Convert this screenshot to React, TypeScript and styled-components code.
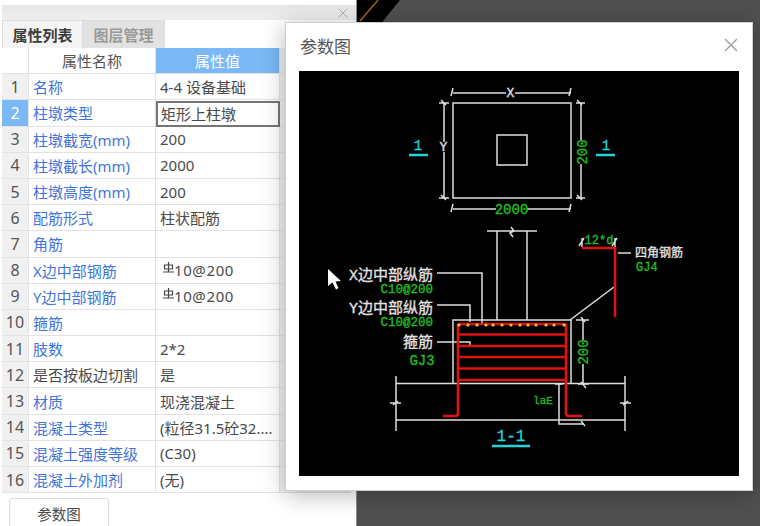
import React from 'react';
import styled, { createGlobalStyle } from 'styled-components';

const Global = createGlobalStyle`
  html, body { margin: 0; padding: 0; background: #fff; overflow: hidden; }
  * { box-sizing: border-box; }
`;

const FONT = `"Noto Sans", "Noto Sans CJK SC", sans-serif`;
const CAD = `"Liberation Mono", "Noto Sans CJK SC", monospace`;

const Screen = styled.div`
  position: relative;
  width: 760px;
  height: 526px;
  display: flex;
  overflow: hidden;
  background: #fff;
  font-family: ${FONT};
`;

const Panel = styled.div`
  width: 356px;
  height: 526px;
  padding: 5px 0 0 2px;
  display: flex;
  flex-direction: column;
  background: #fff;
  flex: none;
`;

const TitleBar = styled.div`
  height: 15px;
  flex: none;
  display: flex;
  align-items: center;
  justify-content: flex-end;
  padding-right: 8px;
  background: linear-gradient(#e7e7e7, #eeeeee);
  color: #aaa;
`;

const Tabs = styled.div`
  height: 28px;
  flex: none;
  display: flex;
  align-items: stretch;
`;

const Tab = styled.div<{ $active?: boolean }>`
  width: ${p => (p.$active ? 81 : 82)}px;
  display: flex;
  align-items: center;
  justify-content: center;
  font-size: 15px;
  font-weight: 700;
  background: ${p => (p.$active ? '#f4f4f4' : '#e2e2e2')};
  color: ${p => (p.$active ? '#3c3c3c' : '#9a9a9a')};
  border: 1px solid #dcdcdc;
  border-left-width: ${p => (p.$active ? 1 : 0)}px;
  border-bottom: none;
`;

const Grid = styled.div`
  width: 349px;
  flex: none;
  display: flex;
  flex-direction: column;
`;

const Row = styled.div`
  height: 26.2px;
  flex: none;
  display: grid;
  grid-template-columns: 27px 127px 124px 71px;
`;

const Cell = styled.div`
  display: flex;
  align-items: center;
  font-size: 15px;
  white-space: nowrap;
  overflow: hidden;
  border-right: 1.5px solid #e2e2e2;
  border-bottom: 1.5px solid #e2e2e2;
`;

const HeadCell = styled(Cell)<{ $on?: boolean }>`
  justify-content: center;
  background: ${p => (p.$on ? '#7ab9f6' : '#fff')};
  color: ${p => (p.$on ? '#fff' : '#555')};
`;

const NumCell = styled(Cell)<{ $on?: boolean }>`
  justify-content: center;
  background: ${p => (p.$on ? '#7ab9f6' : '#f0f0f0')};
  color: ${p => (p.$on ? '#fff' : '#555')};
  font-size: 16px;
`;

const NameCell = styled(Cell)<{ $plain?: boolean }>`
  padding-left: 4px;
  color: ${p => (p.$plain ? '#4a4a4a' : '#3f74da')};
`;

const ValueCell = styled(Cell)<{ $edit?: boolean }>`
  padding-left: ${p => (p.$edit ? 3 : 4)}px;
  color: #4a4a4a;
  ${p => p.$edit && 'border: 2px solid #757575; margin: 1px 0 0 0;'}
`;

const SideCell = styled(Cell)`
  background: #f0f0f0;
`;

const Footer = styled.div`
  flex: 1;
  padding: 5px 0 0 7px;
`;

const FootButton = styled.button`
  width: 100px;
  height: 34px;
  background: #fff;
  border: 1px solid #dcdcdc;
  border-radius: 3px;
  padding: 0 0 4px;
  font-family: ${FONT};
  font-size: 14.5px;
  color: #4a4a4a;
`;

const Canvas = styled.div`
  flex: 1;
  background: #505050;
  border-left: 1px solid #8e8e8e;
`;

const CornerArt = styled.svg`
  display: block;
`;

const Dialog = styled.div`
  position: absolute;
  left: 285px;
  top: 22px;
  width: 468px;
  height: 469px;
  background: #fff;
  border: 1px solid #cfcfcf;
  box-shadow: 0 4px 22px rgba(0, 0, 0, 0.28);
  padding: 0 13px 14px 13px;
  display: flex;
  flex-direction: column;
`;

const DialogHead = styled.div`
  height: 48px;
  flex: none;
  display: flex;
  align-items: center;
  justify-content: space-between;
  padding: 0 1px 4px 1px;
`;

const DialogTitle = styled.div`
  font-size: 17px;
  color: #555;
`;

const Drawing = styled.svg`
  display: block;
  width: 440px;
  height: 405px;
  background: #000;
  flex: none;
`;

const CadText = styled.text<{ $c: 'w' | 'g' | 'c'; $s?: number }>`
  font-family: ${CAD};
  font-size: ${p => p.$s ?? 13}px;
  fill: ${p => (p.$c === 'w' ? '#e4e4e4' : p.$c === 'g' ? '#22c022' : '#22d3d8')};
  stroke: ${p => (p.$c === 'w' ? '#e4e4e4' : p.$c === 'g' ? '#22c022' : '#22d3d8')};
  stroke-width: 0.3;
`;

const White = styled.path`
  fill: none;
  stroke: #dedede;
  stroke-width: 1.5;
`;

const Red = styled.path`
  fill: none;
  stroke: #e01212;
  stroke-width: 2.6;
`;

const Cyan = styled.path`
  fill: none;
  stroke: #22d3d8;
  stroke-width: 2.4;
`;

const X = ({ size, color, w = 1.3 }: { size: number; color: string; w?: number }) => (
  <svg width={size} height={size} viewBox="0 0 14 14">
    <path d="M1 1 13 13M13 1 1 13" stroke={color} strokeWidth={w} fill="none" />
  </svg>
);

const RebarGlyph = styled.svg`
  margin: -6px 0 0 3px;
  flex: none;
`;

const Rebar = () => (
  <RebarGlyph width="11" height="11" viewBox="0 0 11 11">
    <path d="M5.5 0V10M1.5 3H9.5V7H1.5ZM0 10H11" stroke="#444" strokeWidth="1.2" fill="none" />
  </RebarGlyph>
);

const RebarValue = styled.span`
  display: inline-flex;
  align-items: center;
  letter-spacing: 0.6px;
`;

const rows: { n: string; name: string; value?: React.ReactNode; plain?: boolean }[] = [
  { n: '1', name: '名称', value: '4-4 设备基础' },
  { n: '2', name: '柱墩类型', value: '矩形上柱墩' },
  { n: '3', name: '柱墩截宽(mm)', value: '200' },
  { n: '4', name: '柱墩截长(mm)', value: '2000' },
  { n: '5', name: '柱墩高度(mm)', value: '200' },
  { n: '6', name: '配筋形式', value: '柱状配筋' },
  { n: '7', name: '角筋' },
  { n: '8', name: 'X边中部钢筋', value: <RebarValue><Rebar />10@200</RebarValue> },
  { n: '9', name: 'Y边中部钢筋', value: <RebarValue><Rebar />10@200</RebarValue> },
  { n: '10', name: '箍筋' },
  { n: '11', name: '肢数', value: '2*2' },
  { n: '12', name: '是否按板边切割', value: '是', plain: true },
  { n: '13', name: '材质', value: '现浇混凝土' },
  { n: '14', name: '混凝土类型', value: '(粒径31.5砼32....' },
  { n: '15', name: '混凝土强度等级', value: '(C30)' },
  { n: '16', name: '混凝土外加剂', value: '(无)' },
];

const whiteLines = [
  // plan view
  'M453 103H571V198H453Z',
  'M497 135H527V165H497Z',
  'M453 93H506M515 93H571',
  'M453 88 451 96M571 88 569 96',
  'M444 103V142M444 152V198M439 103H449M439 198H449M441 100 446 105M441 195 446 200',
  'M581 103V140M581 164V198M576 103H585M576 198H585M577 100 582 105M577 195 582 200',
  'M453 209H496M527 209H571M453 204 451 212M571 204 569 212',
  // pier
  'M487 231H537M497 231V320M527 231V320M511 227 514 231 510 233 513 237',
  // leaders
  'M437 273H482V323',
  'M437 305H470V322',
  'M437 342H470V346',
  'M618 253H631',
  'M614 287 570 320',
  // slab
  'M453 383.5V320H571V384',
  'M396 383.5H625M396 420H625M396 376V431M625 376V431',
  'M390 403H401M393 405 398 401M620 403H631M623 405 628 401',
  // laE
  'M559 384V424H583M581 421 585 426M555 384H563',
  // 200 dim
  'M583 320V340M583 364V384M576 320H589M578 384H589M581 317 585 322M581 382 586 388',
  // 12*d ticks
  'M582 238V247M615 238V247M579 246 584 238M612 246 617 238',
];

const redLines = [
  'M458 324V414L456.5 416H443',
  'M566 324V414L567.5 416H582',
  'M458 324H566M458 334.5H566M458 346H566M458 357H566M458 368.5H566M458 380H566',
  'M582 248H615V317',
];

const dots = [459, 468, 477, 486, 493, 502, 511, 520, 528, 536, 546, 554, 564];

const CadDrawing = () => (
  <Drawing viewBox="299 71 440 405">
    {whiteLines.map(d => <White key={d} d={d} />)}
    {redLines.map(d => <Red key={d} d={d} />)}
    {dots.map(x => <circle key={x} cx={x} cy={325} r={1.6} fill="#ffc928" />)}
    <Cyan d="M409 155H428M596 155H615M492 446H530" />

    <CadText $c="w" x={510.5} y={97} textAnchor="middle">X</CadText>
    <CadText $c="w" x={443.5} y={151} textAnchor="middle">Y</CadText>
    <CadText $c="g" x={511.5} y={214} textAnchor="middle" $s={14}>2000</CadText>
    <CadText $c="g" x={0} y={0} textAnchor="middle" $s={14} transform="translate(587 152) rotate(-90)">200</CadText>
    <CadText $c="c" x={418} y={150} textAnchor="middle" $s={14}>1</CadText>
    <CadText $c="c" x={606} y={150} textAnchor="middle" $s={14}>1</CadText>

    <CadText $c="w" x={433} y={279.5} textAnchor="end" $s={15}>X边中部纵筋</CadText>
    <CadText $c="g" x={433} y={293} textAnchor="end" $s={12.5}>C10@200</CadText>
    <CadText $c="w" x={433} y={312.5} textAnchor="end" $s={15}>Y边中部纵筋</CadText>
    <CadText $c="g" x={433} y={326} textAnchor="end" $s={12.5}>C10@200</CadText>
    <CadText $c="w" x={433} y={347} textAnchor="end" $s={15}>箍筋</CadText>
    <CadText $c="g" x={422} y={365} textAnchor="middle" $s={14}>GJ3</CadText>

    <CadText $c="g" x={599} y={244} textAnchor="middle" $s={12}>12*d</CadText>
    <CadText $c="w" x={635} y={257} $s={12}>四角钢筋</CadText>
    <CadText $c="g" x={636} y={271} $s={12}>GJ4</CadText>
    <CadText $c="g" x={543} y={404} textAnchor="middle" $s={11}>laE</CadText>
    <CadText $c="g" x={0} y={0} textAnchor="middle" $s={14} transform="translate(588 352) rotate(-90)">200</CadText>
    <CadText $c="c" x={511} y={441} textAnchor="middle" $s={16}>1-1</CadText>

    <path d="M328 269V286L332.5 282.5 336 289.5 338.5 288 335.5 281.5 341 281Z" fill="#fff" />
  </Drawing>
);

export default function App() {
  return (
    <Screen>
      <Global />
      <Panel>
        <TitleBar><X size={10} color="#aaa" /></TitleBar>
        <Tabs>
          <Tab $active>属性列表</Tab>
          <Tab>图层管理</Tab>
        </Tabs>
        <Grid>
          <Row>
            <HeadCell />
            <HeadCell>属性名称</HeadCell>
            <HeadCell $on>属性值</HeadCell>
            <SideCell />
          </Row>
          {rows.map(r => (
            <Row key={r.n}>
              <NumCell $on={r.n === '2'}>{r.n}</NumCell>
              <NameCell $plain={r.plain}>{r.name}</NameCell>
              <ValueCell $edit={r.n === '2'}>{r.value}</ValueCell>
              <SideCell />
            </Row>
          ))}
        </Grid>
        <Footer>
          <FootButton>参数图</FootButton>
        </Footer>
      </Panel>
      <Canvas>
        <CornerArt width="60" height="30" viewBox="357 0 60 30">
          <path d="M357 0H400L383 21V30H357Z" fill="#000" />
          <path d="M378 0 360 21" stroke="#b8701f" strokeWidth="1.2" fill="none" />
        </CornerArt>
      </Canvas>
      <Dialog>
        <DialogHead>
          <DialogTitle>参数图</DialogTitle>
          <X size={14} color="#9a9a9a" />
        </DialogHead>
        <CadDrawing />
      </Dialog>
    </Screen>
  );
}
